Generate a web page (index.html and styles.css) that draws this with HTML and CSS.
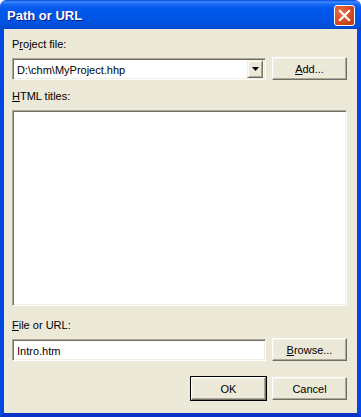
FILE: index.html
```html
<!DOCTYPE html>
<html lang="en">
<head>
    <meta charset="UTF-8">
    <title>Path or URL</title>
    <link rel="stylesheet" href="styles.css">
</head>
<body>
    <div class="window">
        <div class="title-bar">
            <span class="title-text">Path or URL</span>
            <button class="close-button" aria-label="Close">
                <svg width="13" height="13" viewBox="0 0 13 13">
                    <path d="M2 2 L11 11 M11 2 L2 11" stroke="#fff" stroke-width="2.2" stroke-linecap="square"/>
                </svg>
            </button>
        </div>

        <div class="client">
            <div class="label">P<u>r</u>oject file:</div>
            <div class="row">
                <div class="combo">
                    <span class="field-text">D:\chm\MyProject.hhp</span>
                    <span class="combo-arrow">
                        <svg width="7" height="4" viewBox="0 0 7 4"><path d="M0 0 H7 L3.5 4 Z" fill="#000"/></svg>
                    </span>
                </div>
                <button class="button"><u>A</u>dd...</button>
            </div>

            <div class="label label-titles"><u>H</u>TML titles:</div>
            <div class="listbox"></div>

            <div class="label label-file"><u>F</u>ile or URL:</div>
            <div class="row">
                <div class="textbox"><span class="field-text">Intro.htm</span></div>
                <button class="button"><u>B</u>rowse...</button>
            </div>

            <div class="row row-actions">
                <button class="button button-default">OK</button>
                <button class="button">Cancel</button>
            </div>
        </div>
    </div>
</body>
</html>
```

FILE: styles.css
```css
body {
    margin: 0;
    padding: 0;
    background-color: #ffffff;
    font-family: 'Liberation Sans', Arial, sans-serif;
    font-size: 11px;
    color: #000;
}

.window {
    width: 361px;
    height: 417px;
    display: flex;
    flex-direction: column;
}

.title-bar {
    height: 29px;
    flex: none;
    display: flex;
    align-items: center;
    justify-content: space-between;
    padding: 0 6px 0 7px;
    background: linear-gradient(to bottom, #0848d8 0%, #3c8cfc 7%, #1a6af6 14%, #0058ee 30%, #0055e6 60%, #0050dc 85%, #0046cc 100%);
    border-radius: 6px 6px 0 0;
}

.title-text {
    color: #fff;
    font-weight: bold;
    font-size: 13px;
    padding-top: 2px;
    text-shadow: 1px 1px 0 #0a1c8a;
}

.close-button {
    width: 21px;
    height: 21px;
    padding: 0;
    border: 1px solid #fff;
    border-radius: 3px;
    background: radial-gradient(circle at 30% 30%, #e8704a 0%, #d94f26 45%, #bf3414 100%);
    display: flex;
    align-items: center;
    justify-content: center;
    margin-top: 1px;
}

.client {
    flex: 1;
    background-color: #ece9d8;
    border-left: 4px solid #0348e0;
    border-right: 4px solid #0348e0;
    border-bottom: 4px solid #0a34c8;
    padding: 9px 10px 0 8px;
    display: flex;
    flex-direction: column;
}

.label {
    line-height: 13px;
    height: 13px;
}

.label-titles {
    margin-top: 10px;
}

.label-file {
    margin-top: 13px;
}

.row {
    display: flex;
    gap: 6px;
    margin-top: 6px;
    align-items: flex-start;
}

.row-actions {
    margin-top: 16px;
    justify-content: flex-end;
}

.combo,
.textbox,
.listbox {
    background-color: #fff;
    border: 1px solid;
    border-color: #aca899 #fff #fff #aca899;
    box-shadow: inset 1px 1px 0 #716f64, inset -1px -1px 0 #f1efe2;
    box-sizing: border-box;
}

.combo,
.textbox {
    width: 254px;
    height: 22px;
    display: flex;
    align-items: center;
    padding: 2px;
    margin-top: 1px;
}

.field-text {
    flex: 1;
    padding-left: 2px;
    padding-top: 1px;
}

.combo-arrow {
    width: 16px;
    height: 18px;
    box-sizing: border-box;
    background-color: #ece9d8;
    border: 1px solid;
    border-color: #f1efe2 #716f64 #716f64 #f1efe2;
    box-shadow: inset 1px 1px 0 #fff, inset -1px -1px 0 #aca899;
    display: flex;
    align-items: center;
    justify-content: center;
}

.listbox {
    margin-top: 7px;
    height: 196px;
}

.button {
    width: 75px;
    height: 23px;
    box-sizing: border-box;
    padding: 0;
    font-family: inherit;
    font-size: 11px;
    color: #000;
    background-color: #ece9d8;
    border: 1px solid;
    border-color: #fff #716f64 #716f64 #fff;
    box-shadow: inset -1px -1px 0 #aca899, inset 1px 1px 0 #f1efe2;
}

.button-default {
    outline: 1px solid #000;
    outline-offset: 0;
    border-color: #fff #716f64 #716f64 #fff;
}
```
